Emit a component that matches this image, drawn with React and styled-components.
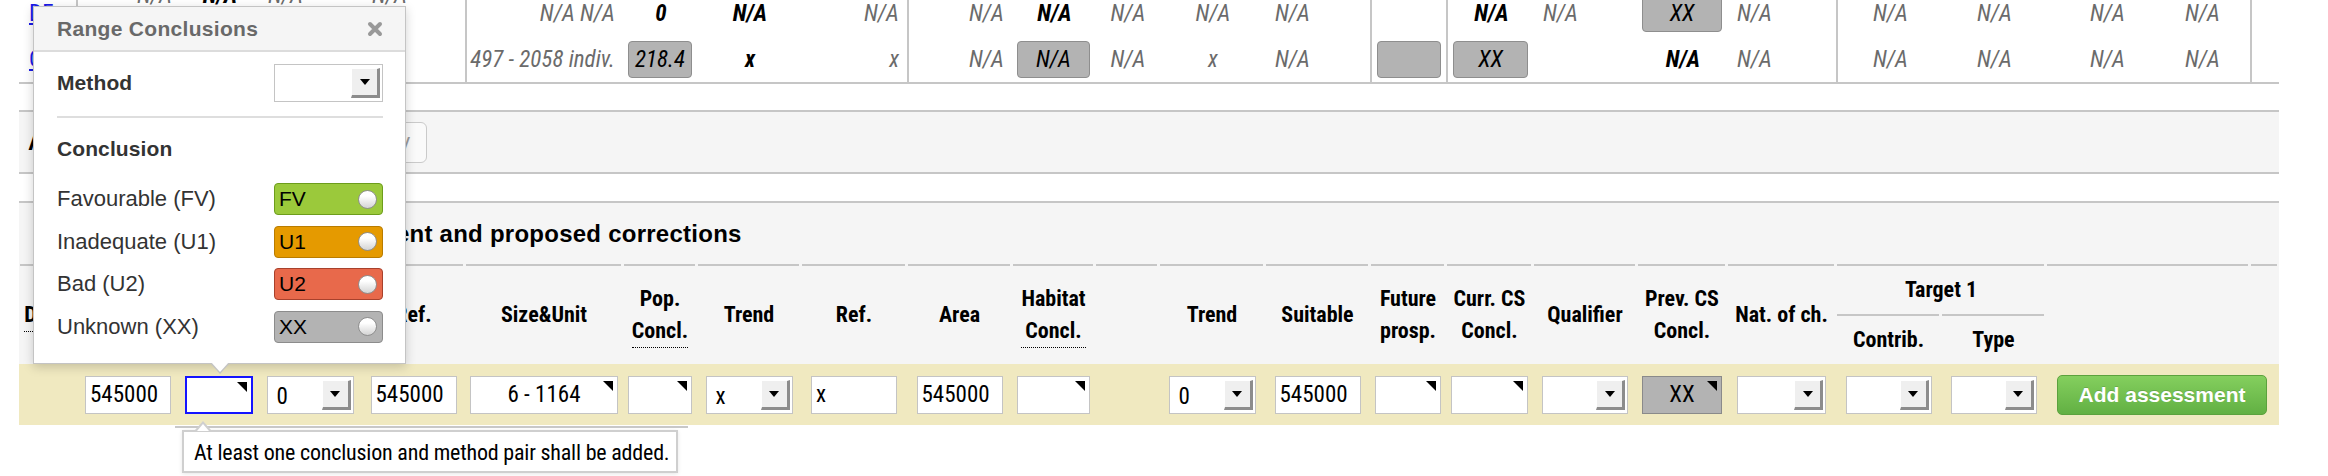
import React from "react";
import styled, { createGlobalStyle } from "styled-components";

const NARROW = `"Liberation Sans Narrow", "Arial Narrow", "Roboto Condensed", "DejaVu Sans Condensed", Roboto, sans-serif`;
const SANS = `"Liberation Sans", Arial, sans-serif`;

// column widths shared by the history rows, the header and the input row
const COLS = [57, 104, 78, 104, 103, 158, 74, 104, 106, 105, 83, 64, 106, 105, 76, 87, 104, 90, 109, 105, 105, 204, 29];
const GRID = COLS.map((w) => `${w}px`).join(" ");
const SEPS = [1, 5, 9, 14, 15, 19, 22];
const LINE = "#c6c6c6";

const GlobalStyle = createGlobalStyle`
  html, body { margin: 0; padding: 0; background: #fff; }
  body { font-family: ${NARROW}; font-size: 23px; color: #000; min-height: 476px; }
`;

const Page = styled.div`
  position: relative;
  width: 2260px;
  min-height: 486px;
  margin: -10px 0 0 19px;
`;

const History = styled.div`
  display: grid;
  grid-template-columns: ${GRID};
  grid-template-rows: 46px 46px;
  border-bottom: 2px solid ${LINE};
`;

const HCell = styled.div`
  display: flex;
  align-items: center;
  justify-content: ${(p) =>
    p.$pair ? "space-around" : p.$align === "left" ? "flex-start" : p.$align === "right" ? "flex-end" : "center"};
  padding: ${(p) => (p.$box ? "0 5px" : p.$pair ? "0 0 0 14px" : "0 8px 0 10px")};
  padding-bottom: ${(p) => (p.$lift ? "36px" : "0")};
  border-left: ${(p) => (p.$sep ? `2px solid ${LINE}` : "none")};
  font-style: italic;
  font-weight: ${(p) => (p.$dark ? 700 : 400)};
  color: ${(p) => (p.$dark ? "#000" : "#6b6b6b")};
  white-space: nowrap;
  min-width: 0;
`;

const RegionLink = styled.a`
  font-style: normal;
  color: #1a1ae8;
  text-decoration: underline;
`;

const Flag = styled.div`
  flex: 1;
  height: 37px;
  box-sizing: border-box;
  border: 1px solid #8e8e8e;
  border-radius: 4px;
  background: #b3b3b3;
  display: flex;
  align-items: center;
  justify-content: center;
  color: #000;
  font-style: italic;
  font-weight: 400;
`;

const Band = styled.div`
  display: flex;
  align-items: center;
  gap: 8px;
  height: 60px;
  margin-top: 26px;
  padding-left: 9px;
  background: #f5f5f5;
  border-top: 2px solid ${LINE};
  border-bottom: 2px solid ${LINE};
`;

const BandLabel = styled.div`
  flex: 0 0 190px;
  font: 700 23px ${SANS};
  white-space: nowrap;
  overflow: hidden;
`;

const BandButton = styled.div`
  width: 201px;
  height: 41px;
  box-sizing: border-box;
  border: 1px solid #cacaca;
  border-radius: 6px;
  background: #fafafa;
  display: flex;
  align-items: center;
  justify-content: flex-end;
  padding-right: 16px;
  font: 22px ${SANS};
  color: #9a9a9a;
`;

const Heading = styled.h2`
  margin: 27px 0 0;
  height: 61px;
  display: flex;
  align-items: center;
  padding-left: 14px;
  background: #f5f5f5;
  border-top: 2px solid ${LINE};
  font: 700 24px ${SANS};
  letter-spacing: 0.25px;
  white-space: nowrap;
`;

const HeaderGrid = styled.div`
  display: grid;
  grid-template-columns: ${GRID};
  grid-template-rows: 50px 50px;
  background: #f5f5f5;
`;

const Th = styled.div`
  grid-column: ${(p) => p.$col} / span ${(p) => p.$span || 1};
  grid-row: ${(p) => p.$row || 1} / span ${(p) => p.$rows || 2};
  display: flex;
  align-items: center;
  justify-content: center;
  padding-top: 2px;
  text-align: center;
  background: linear-gradient(${LINE}, ${LINE}) 1px 0 / calc(100% - 3px) 2px no-repeat;
  font-size: 22px;
  font-weight: 700;
  line-height: 32px;
  white-space: nowrap;
`;

const Abbr = styled.abbr`
  text-decoration: none;
  border-bottom: 1px dotted #000;
`;

const InputRow = styled.div`
  display: grid;
  grid-template-columns: ${GRID};
  height: 61px;
  background: #f0e9c0;
`;

const Td = styled.div`
  grid-column: ${(p) => p.$col} / span ${(p) => p.$span || 1};
  display: flex;
  align-items: center;
  justify-content: ${(p) => (p.$start ? "flex-start" : "center")};
  padding: ${(p) => (p.$start ? "0 0 0 11px" : "0 5px")};
  min-width: 0;
`;

const Field = styled.div`
  width: 86px;
  height: 38px;
  box-sizing: border-box;
  border: 1px solid #c4c4c4;
  background: #fff;
  display: flex;
  align-items: center;
  padding-left: 4px;
`;

const Pick = styled.div`
  position: relative;
  flex: 1;
  height: 38px;
  box-sizing: border-box;
  border: ${(p) => (p.$focus ? "2px solid #1414ff" : p.$gray ? "1px solid #8a8a8a" : "1px solid #c4c4c4")};
  background: ${(p) => (p.$gray ? "#b3b3b3" : "#fff")};
  display: flex;
  align-items: center;
  justify-content: center;

  &::after {
    content: "";
    position: absolute;
    top: 4px;
    right: 4px;
    border-style: solid;
    border-width: 0 10px 10px 0;
    border-color: transparent #000 transparent transparent;
  }
`;

const Select = styled.div`
  width: ${(p) => p.$w || 87}px;
  height: 38px;
  box-sizing: border-box;
  border: 1px solid #c4c4c4;
  background: #fff;
  display: flex;
  align-items: center;
  justify-content: space-between;
  padding: 0 2px 0 9px;
`;

const SelectText = styled.span`
  padding-top: 4px;
`;

const SelectArrow = styled.span`
  align-self: flex-end;
  margin-bottom: 3px;
  width: 29px;
  height: 30px;
  box-sizing: border-box;
  background: #efefef;
  border-top: 1px solid #fff;
  border-left: 1px solid #fff;
  border-right: 3px solid #8c8c8c;
  border-bottom: 3px solid #8c8c8c;
  display: flex;
  align-items: center;
  justify-content: center;

  &::before {
    content: "";
    border-left: 5px solid transparent;
    border-right: 5px solid transparent;
    border-top: 6px solid #000;
  }
`;

const AddButton = styled.button`
  width: 210px;
  height: 40px;
  border: 1px solid #5ba23d;
  border-radius: 5px;
  background: linear-gradient(#84cf5e, #62b043);
  color: #fff;
  font: 700 21px ${SANS};
  text-shadow: 0 -1px 0 rgba(0, 0, 0, 0.15);
  padding: 0;
`;

/* popover */
const Popover = styled.div`
  position: absolute;
  left: 14px;
  top: 16px;
  z-index: 5;
  width: 373px;
  height: 358px;
  box-sizing: border-box;
  background: #fff;
  border: 1px solid #c4c4c4;
  box-shadow: 0 3px 10px rgba(0, 0, 0, 0.18);
  font-family: ${SANS};
  color: #333;

  &::before,
  &::after {
    content: "";
    position: absolute;
    border-style: solid;
    border-color: transparent;
  }
  &::before {
    left: 176px;
    bottom: -11px;
    border-width: 11px 10px 0 10px;
    border-top-color: #c4c4c4;
  }
  &::after {
    left: 177px;
    bottom: -9px;
    border-width: 10px 9px 0 9px;
    border-top-color: #fff;
  }
`;

const PopHead = styled.div`
  height: 43px;
  display: flex;
  align-items: center;
  justify-content: space-between;
  padding: 0 22px 0 23px;
  background: #f5f5f5;
  border-bottom: 2px solid #dcdcdc;
`;

const PopTitle = styled.span`
  font-size: 21px;
  font-weight: 700;
  letter-spacing: 0.3px;
  color: #696969;
`;

const PopBody = styled.div`
  padding: 12px 22px 0 23px;
`;

const PopRow = styled.div`
  display: flex;
  align-items: center;
  justify-content: space-between;
`;

const PopLabel = styled.span`
  font-size: ${(p) => (p.$strong ? 21 : 22)}px;
  font-weight: ${(p) => (p.$strong ? 700 : 400)};
  letter-spacing: ${(p) => (p.$strong ? "0.1px" : "0")};
  color: #333;
`;

const Divider = styled.hr`
  margin: 14px 0 0;
  border: 0;
  height: 2px;
  background: #dedede;
`;

const Section = styled.div`
  margin-top: 18px;
  line-height: 24px;
`;

const ToggleList = styled.div`
  margin-top: 22px;
  display: flex;
  flex-direction: column;
  gap: 10.67px;
`;

const Toggle = styled.div`
  width: 109px;
  height: 32px;
  box-sizing: border-box;
  border-radius: 4px;
  background: ${(p) => p.$bg};
  border: 1px solid ${(p) => p.$edge};
  display: flex;
  align-items: center;
  justify-content: space-between;
  padding: 0 5px 0 4px;
  font-size: 21px;
  color: #000;
`;

const Knob = styled.span`
  width: 19px;
  height: 19px;
  box-sizing: border-box;
  border-radius: 50%;
  border: 1px solid #8f8f8f;
  background: linear-gradient(#ffffff 30%, #d4d4d4);
`;

const Hint = styled.div`
  position: absolute;
  left: 163px;
  top: 440px;
  z-index: 6;
  width: 496px;
  height: 43px;
  box-sizing: border-box;
  display: flex;
  align-items: center;
  padding: 2px 0 0 10px;
  background: #fff;
  border: 2px solid #cfcfcf;
  box-shadow: 0 1px 4px rgba(0, 0, 0, 0.1);
  white-space: nowrap;
  color: #000;
  font-size: 22px;
  letter-spacing: -0.2px;

  &::before {
    content: "";
    position: absolute;
    top: -6px;
    left: -9px;
    right: -12px;
    height: 2px;
    background: #c8c8c8;
  }
`;

const HintCaret = styled.span`
  position: absolute;
  top: -11px;
  left: 11px;
  border-style: solid;
  border-width: 0 8px 9px 8px;
  border-color: transparent transparent #cfcfcf transparent;

  &::after {
    content: "";
    position: absolute;
    top: 3px;
    left: -6px;
    border-style: solid;
    border-width: 0 6px 7px 6px;
    border-color: transparent transparent #fff transparent;
  }
`;

const CloseIcon = () => (
  <svg width="16" height="16" viewBox="0 0 16 16">
    <path d="M3 3 L13 13 M13 3 L3 13" stroke="#999" strokeWidth="4" strokeLinecap="round" />
  </svg>
);

const row1 = [
  { t: "DE", link: true, a: "left" },
  { t: "N/A", lift: true, a: "right" },
  { t: "N/A", dark: true, lift: true },
  { t: "N/A", lift: true, a: "left" },
  { t: "N/A", lift: true, a: "left" },
  { t: "N/A N/A", a: "right" },
  { t: "0", dark: true },
  { t: "N/A", dark: true },
  { t: "N/A", a: "right" },
  { t: "N/A", a: "right" },
  { t: "N/A", dark: true },
  { t: "N/A" },
  { t: "N/A" },
  { t: "N/A", a: "left" },
  {},
  { t: "N/A", dark: true },
  { t: "N/A", a: "left" },
  { flag: "XX" },
  { t: "N/A", a: "left" },
  { t: "N/A" },
  { t: "N/A" },
  { pair: true },
  {},
];

const row2 = [
  { t: "CON", link: true, a: "left" },
  { t: "N/A", a: "right" },
  { flag: "FV" },
  { t: "N/A", a: "left" },
  { t: "N/A", a: "left" },
  { t: "497 - 2058 indiv.", a: "right" },
  { flag: "218.4" },
  { t: "x", dark: true },
  { t: "x", a: "right" },
  { t: "N/A", a: "right" },
  { flag: "N/A" },
  { t: "N/A" },
  { t: "x" },
  { t: "N/A", a: "left" },
  { flag: "" },
  { flag: "XX" },
  {},
  { t: "N/A", dark: true },
  { t: "N/A", a: "left" },
  { t: "N/A" },
  { t: "N/A" },
  { pair: true },
  {},
];

const conclusions = [
  { label: "Favourable (FV)", code: "FV", bg: "#9bc93b", edge: "#6d9d1c" },
  { label: "Inadequate (U1)", code: "U1", bg: "#e59a00", edge: "#b97c00" },
  { label: "Bad (U2)", code: "U2", bg: "#e8694b", edge: "#a8412c" },
  { label: "Unknown (XX)", code: "XX", bg: "#b3b3b3", edge: "#8c8c8c" },
];

function HistoryCells({ cells }) {
  return cells.map((c, i) => (
    <HCell
      key={i}
      $sep={SEPS.includes(i)}
      $align={c.a}
      $lift={c.lift}
      $dark={c.dark}
      $box={c.flag !== undefined}
      $pair={c.pair}
    >
      {c.link && <RegionLink>{c.t}</RegionLink>}
      {c.flag !== undefined && <Flag>{c.flag}</Flag>}
      {c.pair && (
        <>
          <span>N/A</span>
          <span>N/A</span>
        </>
      )}
      {!c.link && c.flag === undefined && !c.pair && c.t}
    </HCell>
  ));
}

function Dropdown({ value, w }) {
  return (
    <Select $w={w}>
      <SelectText>{value}</SelectText>
      <SelectArrow />
    </Select>
  );
}

export default function App() {
  return (
    <>
      <GlobalStyle />
      <Page>
        <History>
          <HistoryCells cells={row1} />
          <HistoryCells cells={row2} />
        </History>

        <Band>
          <BandLabel>Add manual assessment</BandLabel>
          <BandButton>Show history</BandButton>
        </Band>

        <Heading>Member State manual assessment and proposed corrections</Heading>

        <HeaderGrid>
          <Th $col={1}><Abbr>Distr.</Abbr></Th>
          <Th $col={2}>Surface</Th>
          <Th $col={3}><Abbr>Range<br />Concl.</Abbr></Th>
          <Th $col={4}>Trend</Th>
          <Th $col={5}>Ref.</Th>
          <Th $col={6}>Size&amp;Unit</Th>
          <Th $col={7}><Abbr>Pop.<br />Concl.</Abbr></Th>
          <Th $col={8}>Trend</Th>
          <Th $col={9}>Ref.</Th>
          <Th $col={10}>Area</Th>
          <Th $col={11}><Abbr>Habitat<br />Concl.</Abbr></Th>
          <Th $col={12} />
          <Th $col={13}>Trend</Th>
          <Th $col={14}>Suitable</Th>
          <Th $col={15}>Future<br />prosp.</Th>
          <Th $col={16}>Curr. CS<br />Concl.</Th>
          <Th $col={17}>Qualifier</Th>
          <Th $col={18}>Prev. CS<br />Concl.</Th>
          <Th $col={19}>Nat. of ch.</Th>
          <Th $col={20} $span={2} $rows={1}>Target 1</Th>
          <Th $col={20} $row={2} $rows={1}>Contrib.</Th>
          <Th $col={21} $row={2} $rows={1}>Type</Th>
          <Th $col={22} />
          <Th $col={23} />
        </HeaderGrid>

        <InputRow>
          <Td $col={2}><Field>545000</Field></Td>
          <Td $col={3}><Pick $focus /></Td>
          <Td $col={4}><Dropdown value="0" /></Td>
          <Td $col={5}><Field>545000</Field></Td>
          <Td $col={6}><Pick>6 - 1164</Pick></Td>
          <Td $col={7}><Pick /></Td>
          <Td $col={8}><Dropdown value="x" /></Td>
          <Td $col={9}><Field>x</Field></Td>
          <Td $col={10}><Field>545000</Field></Td>
          <Td $col={11}><Pick /></Td>
          <Td $col={13}><Dropdown value="0" /></Td>
          <Td $col={14}><Field>545000</Field></Td>
          <Td $col={15}><Pick /></Td>
          <Td $col={16}><Pick /></Td>
          <Td $col={17}><Dropdown value="" w={86} /></Td>
          <Td $col={18}><Pick $gray>XX</Pick></Td>
          <Td $col={19}><Dropdown value="" w={89} /></Td>
          <Td $col={20}><Dropdown value="" w={86} /></Td>
          <Td $col={21}><Dropdown value="" w={86} /></Td>
          <Td $col={22} $span={2} $start>
            <AddButton>Add assessment</AddButton>
          </Td>
        </InputRow>

        <Popover>
          <PopHead>
            <PopTitle>Range Conclusions</PopTitle>
            <CloseIcon />
          </PopHead>
          <PopBody>
            <PopRow>
              <PopLabel $strong>Method</PopLabel>
              <Dropdown value="" w={109} />
            </PopRow>
            <Divider />
            <Section>
              <PopLabel $strong>Conclusion</PopLabel>
            </Section>
            <ToggleList>
              {conclusions.map((c) => (
                <PopRow key={c.code}>
                  <PopLabel>{c.label}</PopLabel>
                  <Toggle $bg={c.bg} $edge={c.edge}>
                    {c.code}
                    <Knob />
                  </Toggle>
                </PopRow>
              ))}
            </ToggleList>
          </PopBody>
        </Popover>

        <Hint>
          <HintCaret />
          At least one conclusion and method pair shall be added.
        </Hint>
      </Page>
    </>
  );
}
